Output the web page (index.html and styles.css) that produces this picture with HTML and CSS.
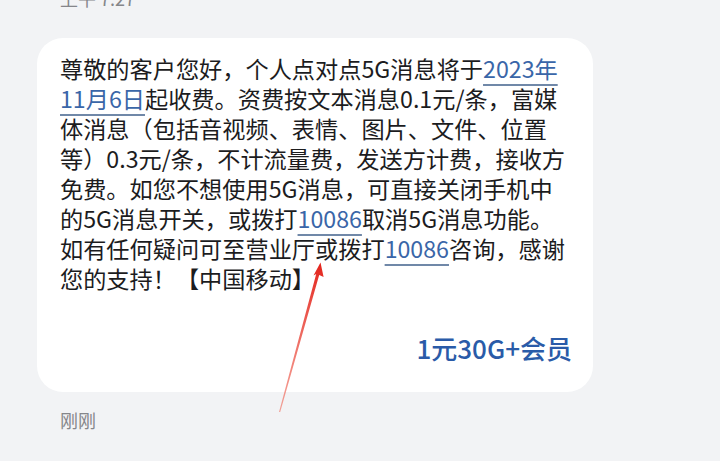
FILE: index.html
```html
<!DOCTYPE html>
<html lang="zh-CN">
<head>
<meta charset="utf-8">
<title>5G消息</title>
<link rel="stylesheet" href="styles.css">
</head>
<body>
<div class="thread">
  <div class="time time-top">上午 7:27</div>
  <div class="bubble">
    <p class="msg">尊敬的客户您好，个人点对点5G消息将于<a class="link">2023年</a><br><a class="link">11月6日</a>起收费。资费按文本消息0.1元/条，富媒<br>体消息（包括音视频、表情、图片、文件、位置<br>等）0.3元/条，不计流量费，发送方计费，接收方<br>免费。如您不想使用5G消息，可直接关闭手机中<br>的5G消息开关，或拨打<a class="link">10086</a>取消5G消息功能。<br>如有任何疑问可至营业厅或拨打<a class="link">10086</a>咨询，感谢<br>您的支持！【中国移动】</p>
    <div class="promo">1元30G+会员</div>
  </div>
  <div class="time">刚刚</div>
</div>
<svg class="arrow" width="720" height="461" viewBox="0 0 720 461" aria-hidden="true">
  <defs>
    <linearGradient id="ag" x1="0" y1="1" x2="0" y2="0">
      <stop offset="0" stop-color="#f06a5a" stop-opacity="0.6"/>
      <stop offset="1" stop-color="#e3241c"/>
    </linearGradient>
  </defs>
  <polygon fill="url(#ag)" points="279,412 316.2,274 313.5,275.5 320.5,262.5 323.6,277 319.2,275 280.2,412"/>
</svg>
</body>
</html>
```
FILE: styles.css
```css
html, body {
  margin: 0;
  padding: 0;
  background: #f2f3f5;
}
body {
  width: 720px;
  height: 461px;
  overflow: hidden;
  position: relative;
  font-family: "Noto Sans CJK SC", "Noto Sans", sans-serif;
  font-kerning: none;
  text-spacing-trim: space-all;
}
.thread {
  padding-left: 37px;
}
.time {
  color: #85868a;
  font-size: 18px;
  line-height: 24px;
  padding-left: 23px;
}
.time-top {
  margin-top: -14px;
}
.bubble {
  margin-top: 28px;
  width: 556px;
  box-sizing: border-box;
  background: #ffffff;
  border-radius: 26px;
  padding: 15px 21px 26px 23px;
}
.msg {
  margin: 0;
  color: #1c1c1e;
  font-size: 23.2px;
  line-height: 30px;
  white-space: nowrap;
}
.link {
  display: inline-block;
  line-height: 30px;
  color: #3a66a8;
  text-decoration: underline;
  text-decoration-color: #7088a8;
  text-decoration-thickness: 2px;
  text-underline-offset: 6px;
}
.promo {
  margin-top: 37px;
  text-align: right;
  color: #2a5ba8;
  font-size: 26px;
  font-weight: 500;
  line-height: 36px;
}
.bubble + .time {
  margin-top: 16px;
}
.arrow {
  position: absolute;
  left: 0;
  top: 0;
  pointer-events: none;
}
```
